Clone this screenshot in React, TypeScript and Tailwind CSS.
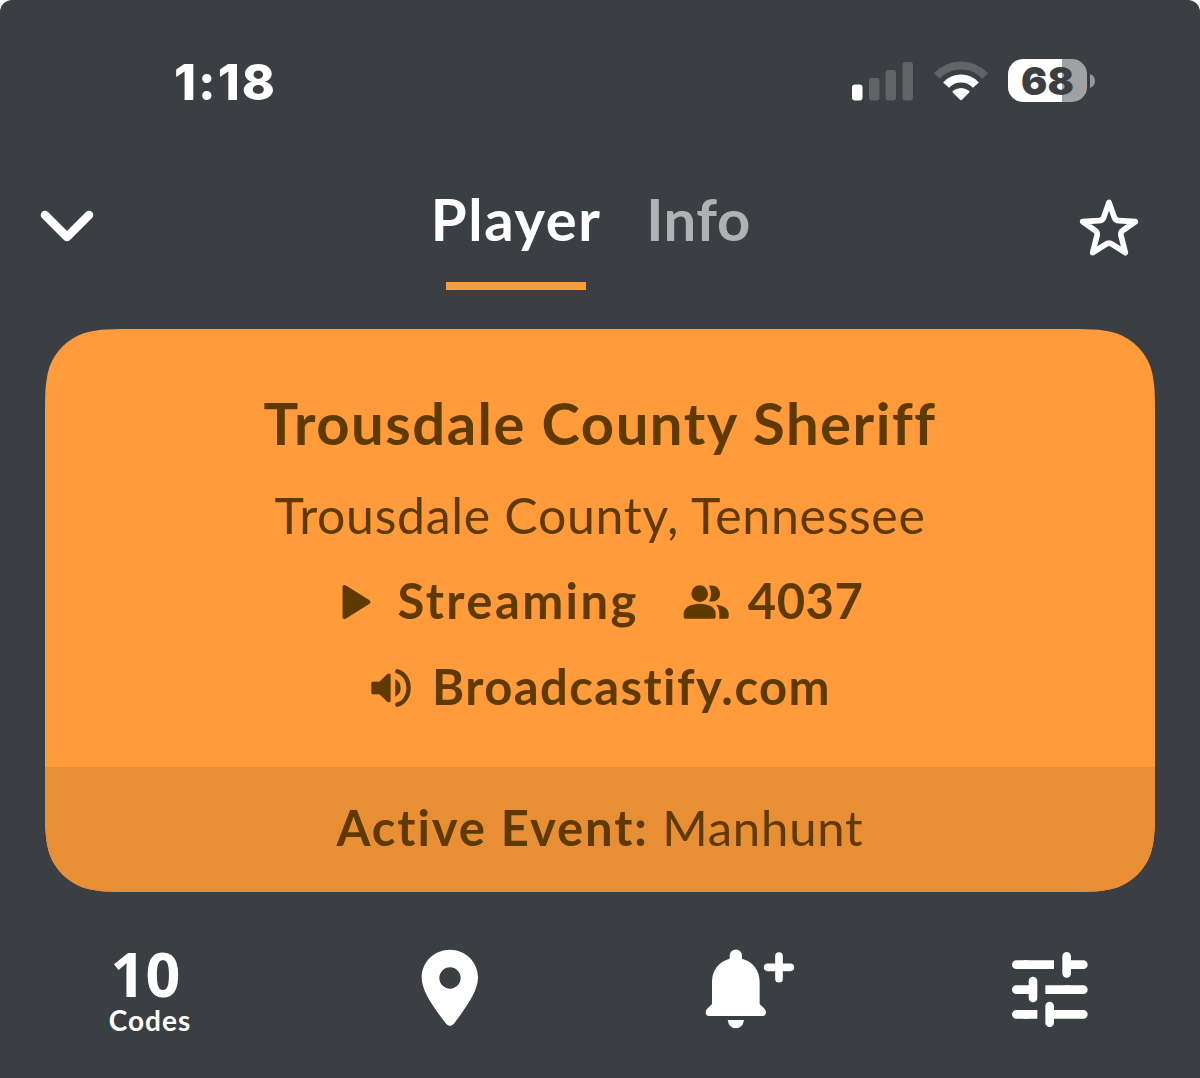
import React from "react";

type IconProps = { className?: string };

const SignalIcon = () => (
  <svg width="62" height="40" viewBox="0 0 62 40">
    <rect x="0" y="23.5" width="10.5" height="16" rx="3" fill="#fff" />
    <rect x="17" y="17" width="10.5" height="22.5" rx="3" fill="#626367" />
    <rect x="33.5" y="9" width="10.5" height="30.5" rx="3" fill="#626367" />
    <rect x="50.5" y="1" width="10.5" height="38.5" rx="3" fill="#626367" />
  </svg>
);

const WifiIcon = () => (
  <svg width="54" height="42" viewBox="0 0 54 42" fill="none">
    <path d="M2.9 16A33 33 0 0 1 51.1 16" stroke="#626367" strokeWidth="8" />
    <path d="M12.1 25.1A20 20 0 0 1 41.9 25.1" stroke="#fff" strokeWidth="8" />
    <path
      d="M18.8 32.4Q18 31.5 19 30.8Q27 25 35 30.8Q36 31.5 35.2 32.4L28 39.8Q27 40.7 26 39.8Z"
      fill="#fff"
    />
  </svg>
);

const Battery = () => (
  <div className="flex items-center gap-[3px]">
    <div className="flex h-[43px] w-[79px] items-center justify-center rounded-[15px] bg-linear-to-r from-white from-68% to-[#a0a1a3] to-68%">
      <span className="font-['Inter'] text-[39px] leading-none font-black text-[#3b3e42]">
        68
      </span>
    </div>
    <svg width="5" height="14" viewBox="0 0 5 14">
      <path d="M0 0Q5 2 5 7Q5 12 0 14Z" fill="#98999b" />
    </svg>
  </div>
);

const ChevronIcon = () => (
  <svg width="54" height="32" viewBox="0 0 54 32" fill="none">
    <path
      d="M5 5L27 27L49 5"
      stroke="#fff"
      strokeWidth="8.5"
      strokeLinecap="round"
      strokeLinejoin="round"
    />
  </svg>
);

const StarIcon = () => (
  <svg width="60" height="60" viewBox="88 54 180 180" fill="none">
    <path
      d="M178 67L162 112Q158 122 148 122L99 125L136 151Q144 157 142 167L129 218L168 193Q178 186 188 193L227 218L214 167Q212 157 220 151L257 125L208 122Q198 122 194 112Z"
      stroke="#fff"
      strokeWidth="17"
      strokeLinejoin="round"
    />
  </svg>
);

const PlayIcon = () => (
  <svg width="30" height="36" viewBox="0 0 30 36">
    <path
      d="M2.5 3V33L26.5 18Z"
      fill="currentColor"
      stroke="currentColor"
      strokeWidth="4"
      strokeLinejoin="round"
    />
  </svg>
);

const PeopleIcon = () => (
  <svg width="46" height="34" viewBox="190 73 138 102" fill="currentColor">
    <circle cx="240" cy="99" r="25" />
    <path d="M192 158C192 140 214 129 240 129C266 129 288 140 288 158V168Q288 174 282 174H198Q192 174 192 168Z" />
    <path d="M268 76C285 71 301 82 301 99C301 116 285 127 268 121C276 109 276 89 268 76Z" />
    <path d="M289 132C310 134 327 143 327 159V168Q327 174 321 174H299V159C299 148 296 140 289 132Z" />
  </svg>
);

const SpeakerIcon = () => (
  <svg width="40" height="38" viewBox="152 328 120 114" fill="currentColor">
    <path d="M157 366H177L201 343Q211 338 211 348V422Q211 431 201 426L177 404H157Q153 404 153 400V370Q153 366 157 366Z" />
    <path d="M225 359Q241 367 241 385Q241 403 225 411Z" />
    <path
      d="M231 335C276 347 276 423 231 435"
      fill="none"
      stroke="currentColor"
      strokeWidth="13"
      strokeLinecap="round"
    />
  </svg>
);

const PinIcon = () => (
  <svg width="58" height="78" viewBox="64 58 174 234">
    <path
      fillRule="evenodd"
      fill="#fff"
      d="M151 60C197 60 235 97 235 143C235 184 203 228 164 281Q151 297 138 281C98 228 66 184 66 143C66 97 104 60 151 60ZM151 113A32 32 0 1 0 151 177A32 32 0 1 0 151 113Z"
    />
  </svg>
);

const BellIcon = ({ className }: IconProps) => (
  <svg className={className} width="90" height="80" viewBox="45 59 270 240" fill="#fff">
    <path d="M119 88V79A18 18 0 0 1 156 79V88C190 97 209 124 209 157V224L224 239Q228 243 228 249Q228 260 217 260H58Q47 260 47 249Q47 243 51 239L66 224V157C66 124 85 97 119 88Z" />
    <path d="M113 272H162Q158 297 137.500 297Q117 297 113 272Z" />
    <path d="M267 80V148M233 114H301" stroke="#fff" strokeWidth="23" strokeLinecap="round" />
  </svg>
);

const TuneIcon = () => (
  <svg width="76" height="76" viewBox="66 66 228 228">
    <g stroke="#fff" strokeWidth="26" strokeLinecap="round">
      <path d="M79 104H110M230 79V130M230 104H280" />
      <path d="M79 179H128M129 153V204M230 179H280" />
      <path d="M79 253H110M179 228V278M180 253H280" />
    </g>
    <path d="M100 91H192V117H100ZM166 166H240V192H166ZM100 240H142V266H100Z" fill="#fff" />
  </svg>
);

const StatusBar = () => (
  <header className="flex h-[161px] items-center justify-between pr-[105px] pl-[174px]">
    <span className="pt-[2px] font-['Inter'] text-[50px] leading-none font-extrabold tracking-[2px]">
      1:18
    </span>
    <div className="flex items-center">
      <SignalIcon />
      <div className="mr-5 ml-5">
        <WifiIcon />
      </div>
      <Battery />
    </div>
  </header>
);

const Tabs = () => (
  <nav className="flex h-[168px] justify-between pr-[61px] pl-10">
    <div className="pt-[49px]">
      <ChevronIcon />
    </div>
    <div className="flex gap-[46px] pl-[10px] text-[58px] leading-[116px] font-bold">
      <div className="flex h-[129px] w-[168px] flex-col items-center">
        <span className="h-[121px] tracking-[1.6px]">Player</span>
        <span className="h-2 w-[140px] bg-[#ff9a38]" />
      </div>
      <span className="tracking-[0.6px] text-[#b0b1b3]">Info</span>
    </div>
    <div className="pt-[37px]">
      <StarIcon />
    </div>
  </nav>
);

const StationCard = () => (
  <section className="mx-auto flex h-[563px] w-[1110px] flex-col bg-[#ff9b3b] text-[#5f3a00] [clip-path:path('M91.7_0H1018.3C1044.7_0_1057.9_0_1072.1_4.5C1087.6_10.1_1099.9_22.4_1105.5_37.9C1110_52.1_1110_65.3_1110_91.7V471.3C1110_497.7_1110_510.9_1105.5_525.1C1099.9_540.6_1087.6_552.9_1072.1_558.5C1057.9_563_1044.7_563_1018.3_563H91.7C65.3_563_52.1_563_37.9_558.5C22.4_552.9_10.1_540.6_4.5_525.1C0_510.9_0_497.7_0_471.3V91.7C0_65.3_0_52.1_4.5_37.9C10.1_22.4_22.4_10.1_37.9_4.5C52.1_0_65.3_0_91.7_0Z')]">
    <div className="flex grow flex-col items-center pt-[46px] whitespace-nowrap">
      <h1 className="h-24 text-[58px] leading-[95px] font-bold tracking-[1.5px]">
        Trousdale County Sheriff
      </h1>
      <p className="h-[88px] text-[50px] leading-[88px] tracking-[0.7px]">
        Trousdale County, Tennessee
      </p>
      <div className="flex h-[82px] items-center pl-[5px] text-[49px] leading-[82px] font-bold">
        <span className="pt-1">
          <PlayIcon />
        </span>
        <span className="ml-[26px] tracking-[2.4px]">Streaming</span>
        <span className="mr-[19px] ml-[44px] pt-1">
          <PeopleIcon />
        </span>
        <span className="tracking-[0.5px]">4037</span>
      </div>
      <div className="flex h-[90px] items-center pl-[2px] text-[49px] leading-[90px] font-bold">
        <span className="mr-[21px] pt-1">
          <SpeakerIcon />
        </span>
        <span className="tracking-[1.4px]">Broadcastify.com</span>
      </div>
    </div>
    <div className="h-[125px] bg-[#e88e35] text-center text-[49px] leading-[121px] tracking-[0.8px]">
      <b className="font-bold tracking-[1.9px]">Active Event:</b> Manhunt
    </div>
  </section>
);

const BottomNav = () => (
  <footer className="grid h-[186px] grid-cols-4 justify-items-center">
    <div className="flex flex-col items-center pt-[51px]">
      <span className="mr-[9px] font-['Open_Sans'] text-[61px] leading-[62px] font-bold">10</span>
      <span className="text-[28px] leading-[30px] font-bold tracking-[1px]">Codes</span>
    </div>
    <div className="pt-[57px]">
      <PinIcon />
    </div>
    <BellIcon className="mt-[57px]" />
    <div className="pt-[60px]">
      <TuneIcon />
    </div>
  </footer>
);

const App = () => {
  return (
    <div className="h-[1078px] w-[1200px] bg-white">
      <main className="h-full overflow-hidden rounded-t-xl bg-[#3b3e42] font-['Lato',sans-serif] text-white">
        <StatusBar />
        <Tabs />
        <StationCard />
        <BottomNav />
      </main>
    </div>
  );
};

export default App;
